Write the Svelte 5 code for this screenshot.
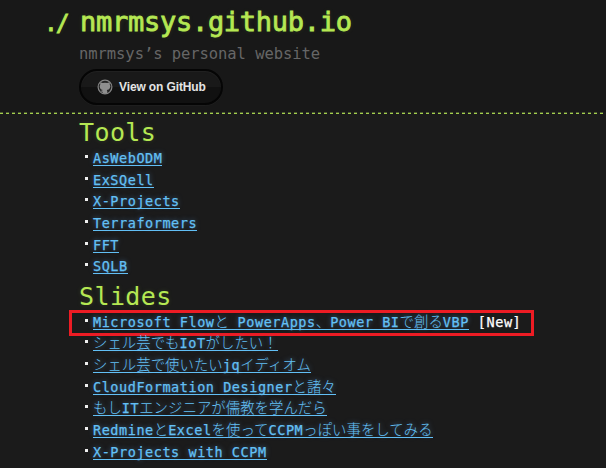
<script>
  const tools = ['AsWebODM', 'ExSQell', 'X-Projects', 'Terraformers', 'FFT', 'SQLB'];
  const slides = [
    { title: 'Microsoft Flowと PowerApps、Power BIで創るVBP', isNew: true },
    { title: 'シェル芸でもIoTがしたい！' },
    { title: 'シェル芸で使いたいjqイディオム' },
    { title: 'CloudFormation Designerと諸々' },
    { title: 'もしITエンジニアが儒教を学んだら' },
    { title: 'RedmineとExcelを使ってCCPMっぽい事をしてみる' },
    { title: 'X-Projects with CCPM' }
  ];
  // Latin and Japanese runs use different faces and tracking.
  const runs = (text) => text.match(/[\x20-\x7e]+|[^\x20-\x7e]+/g);
  const isJa = (text) => text.charCodeAt(0) > 126;
</script>

{#snippet link(title)}
  <a href="#top">{#each runs(title) as run}<span class:ja={isJa(run)}>{run}</span>{/each}</a>
{/snippet}

<div class="page">
  <header>
    <h1><span class="prompt">./</span>nmrmsys.github.io</h1>
    <h2>nmrmsys’s personal website</h2>
    <button>
      <svg viewBox="0 0 16 16" width="16" height="16">
        <circle cx="8" cy="8" r="6.9" fill="#242424" stroke="#858585" stroke-width="1.2" />
        <path fill="#8f8f8f" d="M3.4 3.2 5.8 4.1Q8 3.6 10.2 4.1L12.6 3.2Q13 4.4 12.7 5.2 14 7 12.8 9.2 12 10.8 9.8 11.1 10.4 11.6 10.4 14.2L8 14.8 5.6 14.2V12.8Q4.2 13.1 3.5 11.6 4.6 12.2 5.8 11.1 3.8 10.8 3.1 9.2 2.2 7 3.3 5.2 3 4.2 3.4 3.2Z" />
      </svg>
      <span>View on GitHub</span>
    </button>
  </header>
  <div class="rule"></div>
  <main>
    <h3>Tools</h3>
    <ul>
      {#each tools as tool}
        <li>{@render link(tool)}</li>
      {/each}
    </ul>
    <h3 class="second">Slides</h3>
    <ul>
      {#each slides as slide}
        <li>
          {@render link(slide.title)}
          {#if slide.isNew}<span class="new">[New]</span><i class="frame"></i>{/if}
        </li>
      {/each}
    </ul>
  </main>
</div>

<style>
  :global(body) { background: #1a1a1a; }
  .page {
    width: 606px;
    height: 468px;
    overflow: hidden;
    background: #1b1b1b;
    color: #fff;
    font-family: "DejaVu Sans Mono", "Noto Sans CJK JP", monospace;
  }
  header {
    box-sizing: border-box;
    height: 112px;
    padding: 4px 0 0 79px;
    background: #181818;
  }
  h1, h2, h3, ul { margin: 0; padding: 0; }
  h1 {
    height: 38px;
    line-height: 35px;
    padding-left: 1px;
    color: #b5e853;
    font-size: 27px;
    font-weight: 400;
    letter-spacing: -0.27px;
    -webkit-text-stroke: 0.8px #b5e853;
    text-shadow: 0 0 5px rgba(181, 232, 83, 0.15);
    white-space: nowrap;
  }
  .prompt {
    display: inline-block;
    width: 36px;
    margin-left: -36px;
    font-size: 23px;
    letter-spacing: -2px;
  }
  h2 {
    height: 27px;
    line-height: 24px;
    color: #666;
    font-size: 15.5px;
    font-weight: 400;
    letter-spacing: -0.06px;
    white-space: nowrap;
  }
  button {
    display: flex;
    align-items: center;
    gap: 6px;
    box-sizing: border-box;
    width: 144px;
    height: 36px;
    margin: 0;
    padding: 0 0 0 16px;
    border: 2px solid #050505;
    border-radius: 18px;
    background: linear-gradient(#191919 0 50%, #111 50%);
    box-shadow: inset 0 1px 1px #222, 0 1px 0 #1e1e1e;
    color: #e4e4e4;
    font: bold 12px "Liberation Sans", Arial, sans-serif;
    letter-spacing: -0.12px;
    white-space: nowrap;
  }
  .rule {
    height: 2px;
    background:
      repeating-linear-gradient(90deg, #a4cf4d 0 3px, transparent 3px 6px) 0 1px / 100% 1px no-repeat,
      repeating-linear-gradient(90deg, #4d5d30 0 3px, transparent 3px 6px) 0 0 / 100% 1px no-repeat;
  }
  main { padding: 3px 0 0 79px; }
  h3 {
    height: 32px;
    line-height: 31px;
    color: #b5e853;
    font-size: 25px;
    font-weight: 400;
    letter-spacing: 0.4px;
    text-shadow: 0 0 5px rgba(181, 232, 83, 0.15);
  }
  .second { height: 34px; line-height: 35px; }
  ul { list-style: none; }
  li {
    position: relative;
    display: flex;
    height: 21.65px;
    line-height: 19px;
    padding-left: 14px;
    font-size: 13.5px;
    letter-spacing: 0.55px;
    white-space: pre;
  }
  li::before {
    content: "";
    position: absolute;
    left: 6px;
    top: 6px;
    width: 3px;
    height: 3px;
    background: #eee;
  }
  a {
    box-sizing: border-box;
    height: 17px;
    border-bottom: 1px solid #63c0f5;
    color: #63c0f5;
    text-decoration: none;
    text-shadow: 0 0 5px rgba(104, 182, 255, 0.5);
  }
  a span:not(.ja), .new { -webkit-text-stroke: 0.25px currentColor; }
  .ja {
    font-family: "Noto Sans CJK JP", sans-serif;
    font-size: 14.4px;
    font-weight: 300;
    letter-spacing: 0.03px;
    line-height: 16px;
  }
  .new { margin-left: 9px; }
  .frame {
    position: absolute;
    left: -10px;
    top: -3px;
    box-sizing: border-box;
    width: 465px;
    height: 26px;
    border: 3px solid #ed1c24;
  }
</style>
